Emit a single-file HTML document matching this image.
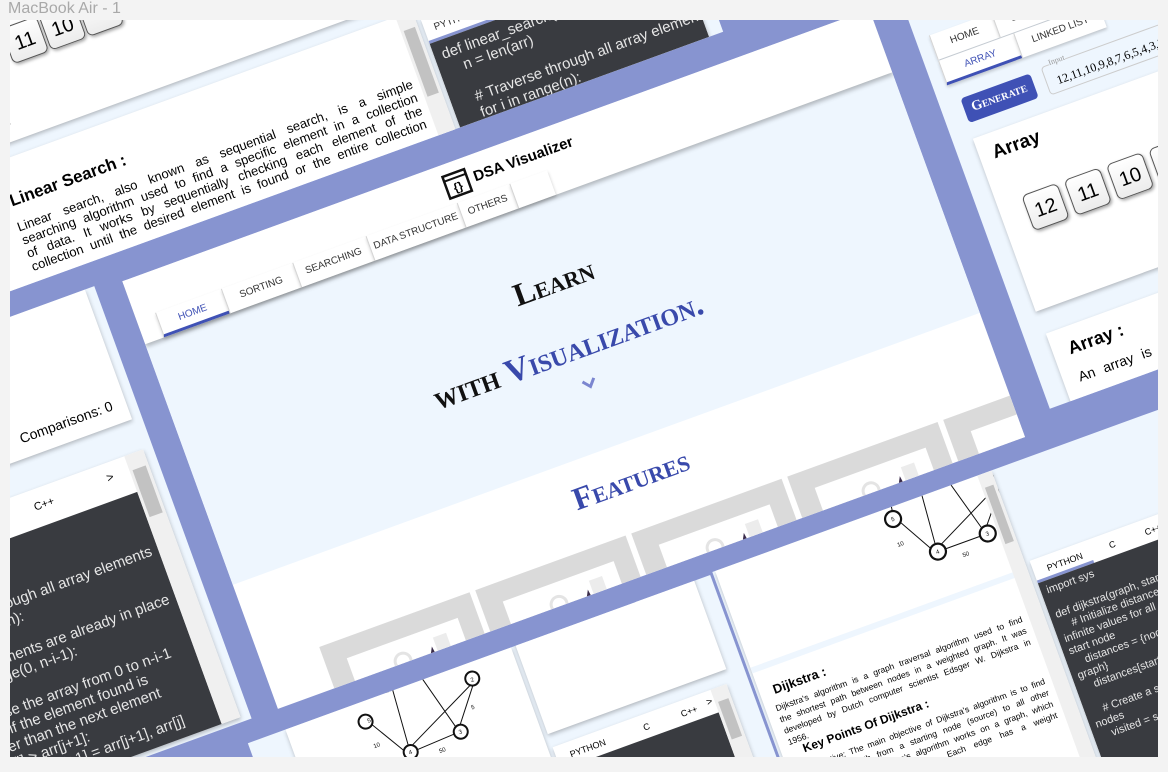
<!DOCTYPE html>
<html><head><meta charset="utf-8"><style>
*{margin:0;padding:0;box-sizing:border-box}
html,body{width:1168px;height:772px;overflow:hidden}
body{background:#f3f3f3;position:relative;font-family:"Liberation Sans",sans-serif}
#lbl{position:absolute;left:8px;top:0;font-size:16px;color:#a9a9a9}
#frame{position:absolute;left:10px;top:20px;width:1148px;height:737px;overflow:hidden;background:#8794d0}
#g{position:absolute;left:0;top:0;transform-origin:0 0;transform:translate(114px,266px) rotate(-20deg)}
.a{position:absolute}
.pg{position:absolute;background:#eef6fe;overflow:hidden}
.card{position:absolute;background:#fff;box-shadow:0 2px 4px rgba(0,0,0,.25);overflow:hidden}
.code{position:absolute;background:#393b40;color:#e6e6e6;font-size:15px;line-height:17px;white-space:pre;overflow:hidden}
.sb{position:absolute;background:#f0f0f0}
.sb i{position:absolute;left:3px;right:3px;background:#c2c2c2}
.tab{position:absolute;background:#fff;font-size:10px;color:#333;text-align:center;border-left:1px solid #d4d4d4;box-shadow:0 2px 3px rgba(0,0,0,.2)}
.sc{font-family:"Liberation Serif",serif;font-weight:bold;font-variant:small-caps}
.box{position:absolute;width:38px;height:38px;border:1px solid #555;border-radius:6px;background:linear-gradient(#fff,#ececec);box-shadow:1px 2px 3px rgba(0,0,0,.35);font-size:20px;text-align:center;line-height:38px}
.feat{position:absolute;width:160px;height:150px;background:#dadada}
.feat div{position:absolute;left:22px;top:20px;width:118px;height:110px;background:#fff}
</style></head><body>
<div id="lbl">MacBook Air - 1</div>
<div id="frame"><div id="g">

<!-- top-left page -->
<div class="pg" style="left:-700px;top:-520px;width:1350px;height:486px">
  <div class="card" style="left:0;top:0;width:1040px;height:346px">
    <div class="box" style="left:620px;top:236px">12</div>
    <div class="box" style="left:672px;top:236px">11</div>
    <div class="box" style="left:712px;top:236px">10</div>
    <div class="box" style="left:752px;top:236px">9</div>
    <div class="a" style="left:600px;top:320px;font-size:13px">Steps: --</div>
  </div>
  <div class="card" style="left:0;top:360px;width:1065px;height:128px">
    <div class="a" style="left:622px;top:32px;font-size:17px;font-weight:bold">Linear Search :</div>
    <div class="a" style="left:620px;top:62px;width:420px;font-size:13px;line-height:14px;text-align:justify;word-spacing:4px">Linear search, also known as sequential search, is a simple searching algorithm used to find a specific element in a collection of data. It works by sequentially checking each element of the collection until the desired element is found or the entire collection</div>
    <div class="sb" style="left:1047px;top:0;width:18px;height:128px"><i style="top:16px;height:70px"></i></div>
  </div>
  <div class="card" style="left:1070px;top:370px;width:265px;height:116px;background:#fff">
    <div class="a" style="left:10px;top:8px;font-size:10px;color:#333">PYTHON</div>
    <div class="a" style="left:0;top:24px;width:70px;height:3px;background:#8794d0"></div>
    <div class="code" style="left:0;top:27px;width:265px;height:100px;padding:6px 8px">def linear_search(arr, target):
    n = len(arr)

    # Traverse through all array elements
    for i in range(n):</div>
  </div>
</div>

<!-- left page -->
<div class="pg" style="left:-700px;top:-10px;width:672px;height:460px">
  <div class="card" style="left:0;top:0;width:662px;height:138px">
    <div class="a" style="left:550px;top:110px;font-size:14px">Comparisons: 0</div>
  </div>
  <div class="card" style="left:0;top:170px;width:662px;height:285px">
    <div class="a" style="left:540px;top:12px;font-size:11px">C++</div>
    <div class="a" style="left:618px;top:8px;font-size:12px">&gt;</div>
    <div class="code" style="left:0;top:38px;width:642px;height:250px;padding:52px 0 0 370px">    # Traverse through all array elements
    for i in range(n):

    # Last i elements are already in place
    for j in range(0, n-i-1):

    # Traverse the array from 0 to n-i-1
    # Swap if the element found is
    # greater than the next element
        if arr[j] &gt; arr[j+1]:
            arr[j], arr[j+1] = arr[j+1], arr[j]</div>
    <div class="sb" style="left:642px;top:0;width:20px;height:285px"><i style="top:16px;height:50px"></i></div>
  </div>
</div>

<!-- main page -->
<div class="pg" style="left:0;top:-5px;width:795px;height:455px;background:#fff">
  <div class="a" style="left:0;top:67px;width:795px;height:256px;background:#eef6fe"></div>
  <div class="a" style="left:0;top:0;width:795px;height:67px;background:#fff;box-shadow:0 3px 4px rgba(0,0,0,.25)"></div>
  <svg class="a" style="left:335px;top:10px" width="26" height="26" viewBox="0 0 26 26"><rect x="1.5" y="1.5" width="23" height="23" fill="none" stroke="#111" stroke-width="2.5"/><line x1="1.5" y1="6.5" x2="24.5" y2="6.5" stroke="#111" stroke-width="2"/><text x="13" y="20" font-size="12" font-weight="bold" text-anchor="middle" font-family="Liberation Sans">{}</text></svg>
  <div class="a" style="left:366px;top:14px;font-size:15px;font-weight:bold">DSA Visualizer</div>
  <div class="tab" style="left:20px;top:41px;width:70px;height:26px;line-height:26px;color:#3f51b5;border-bottom:3px solid #3f51b5">HOME</div>
  <div class="tab" style="left:90px;top:41px;width:76px;height:26px;line-height:26px">SORTING</div>
  <div class="tab" style="left:166px;top:41px;width:78px;height:26px;line-height:26px">SEARCHING</div>
  <div class="tab" style="left:244px;top:41px;width:97px;height:26px;line-height:26px">DATA STRUCTURE</div>
  <div class="tab" style="left:341px;top:41px;width:56px;height:26px;line-height:26px">OTHERS</div>
  <div class="tab" style="left:397px;top:41px;width:40px;height:26px"></div>
  <div class="a sc" style="left:300px;top:130px;width:210px;text-align:center;font-size:32px;color:#111">Learn</div>
  <div class="a sc" style="left:200px;top:200px;width:390px;text-align:center;font-size:34px;color:#111">with <span style="color:#3949ab">Visualization.</span></div>
  <svg class="a" style="left:396px;top:250px" width="16" height="12"><path d="M2 2 L8 9 L14 2" fill="none" stroke="#7b86d0" stroke-width="3"/></svg>
  <div class="a sc" style="left:300px;top:342px;width:220px;text-align:center;font-size:32px;color:#3949ab">Features</div>
  <div class="feat" style="left:60px;top:411px"><div><svg width="118" height="60"><circle cx="24" cy="30" r="5" fill="#333"/><rect x="20" y="35" width="9" height="8" fill="#5a3d6e"/><circle cx="52" cy="22" r="8" fill="none" stroke="#e4e4e4" stroke-width="3"/><path d="M62 60 L84 18 L90 60Z" fill="#3a2b4a"/><rect x="88" y="10" width="14" height="16" fill="#ececec"/></svg></div></div>
  <div class="feat" style="left:226px;top:411px"><div><svg width="118" height="60"><circle cx="24" cy="30" r="5" fill="#333"/><rect x="20" y="35" width="9" height="8" fill="#5a3d6e"/><circle cx="52" cy="22" r="8" fill="none" stroke="#e4e4e4" stroke-width="3"/><path d="M62 60 L84 18 L90 60Z" fill="#3a2b4a"/><rect x="88" y="10" width="14" height="16" fill="#ececec"/></svg></div></div>
  <div class="feat" style="left:392px;top:411px"><div><svg width="118" height="60"><circle cx="24" cy="30" r="5" fill="#333"/><rect x="20" y="35" width="9" height="8" fill="#5a3d6e"/><circle cx="52" cy="22" r="8" fill="none" stroke="#e4e4e4" stroke-width="3"/><path d="M62 60 L84 18 L90 60Z" fill="#3a2b4a"/><rect x="88" y="10" width="14" height="16" fill="#ececec"/></svg></div></div>
  <div class="feat" style="left:558px;top:411px"><div><svg width="118" height="60"><circle cx="24" cy="30" r="5" fill="#333"/><rect x="20" y="35" width="9" height="8" fill="#5a3d6e"/><circle cx="52" cy="22" r="8" fill="none" stroke="#e4e4e4" stroke-width="3"/><path d="M62 60 L84 18 L90 60Z" fill="#3a2b4a"/><rect x="88" y="10" width="14" height="16" fill="#ececec"/></svg></div></div>
  <div class="feat" style="left:724px;top:411px"><div><svg width="118" height="60"><circle cx="24" cy="30" r="5" fill="#333"/><rect x="20" y="35" width="9" height="8" fill="#5a3d6e"/><path d="M62 60 L84 18 L90 60Z" fill="#3a2b4a"/></svg></div></div>
</div>

<!-- right page -->
<div class="pg" style="left:828px;top:-400px;width:480px;height:832px">
  <div class="tab" style="left:14px;top:440px;width:66px;height:26px;line-height:26px">HOME</div>
  <div class="tab" style="left:80px;top:440px;width:78px;height:26px;line-height:26px">SORTING</div>
  <div class="tab" style="left:158px;top:440px;width:90px;height:26px;line-height:26px">SEARCHING</div>
  <div class="tab" style="left:14px;top:467px;width:80px;height:26px;line-height:26px;color:#3f51b5;border-bottom:3px solid #3f51b5">ARRAY</div>
  <div class="tab" style="left:94px;top:467px;width:90px;height:26px;line-height:26px">LINKED LIST</div>
  <div class="a sc" style="left:22px;top:510px;width:74px;height:26px;background:#3f51b5;color:#fff;font-size:14px;text-align:center;line-height:26px;border-radius:4px">Generate</div>
  <div class="a" style="left:108px;top:508px;width:190px;height:30px;border:1px solid #ccc;border-radius:4px;font-family:'Liberation Serif',serif;font-size:12px;padding:10px 0 0 10px">12,11,10,9,8,7,6,5,4,3,2,1<span class="a" style="left:8px;top:-7px;font-size:8px;color:#999;background:#eef6fe">Input</span></div>
  <div class="card" style="left:20px;top:552px;width:460px;height:184px">
    <div class="a" style="left:14px;top:10px;font-size:19px;font-weight:bold">Array</div>
    <div class="box" style="left:26px;top:70px">12</div>
    <div class="box" style="left:71px;top:70px">11</div>
    <div class="box" style="left:116px;top:70px">10</div>
    <div class="box" style="left:161px;top:70px">9</div>
    <div class="box" style="left:206px;top:70px">8</div>
  </div>
  <div class="card" style="left:22px;top:760px;width:460px;height:80px">
    <div class="a" style="left:16px;top:12px;font-size:18px;font-weight:bold">Array :</div>
    <div class="a" style="left:16px;top:44px;font-size:14px;word-spacing:5px">An array is a collection of items</div>
  </div>
</div>

<!-- bottom-middle page -->
<div class="pg" style="left:-40px;top:472px;width:492px;height:440px">
  <div class="card" style="left:40px;top:0;width:240px;height:300px;overflow:hidden">
    <svg class="a" style="left:52px;top:-60px" width="180" height="140"><g transform="translate(26,80)" fill="none" stroke="#111">
      <circle cx="0" cy="0" r="7" stroke-width="2"/><circle cx="115" cy="-4" r="7" stroke-width="2"/><circle cx="86" cy="42" r="7" stroke-width="2"/><circle cx="32" cy="44" r="7" stroke-width="2"/>
      <path d="M5 5 L26 40 M39 44 L79 42 M36 38 L110 2 M88 35 L113 3 M40 -70 L32 37 M55 -70 L83 36"/></g>
      <g font-size="6" fill="#111" font-family="Liberation Sans"><text x="28" y="82">5</text><text x="139" y="79">2</text><text x="110" y="124">3</text><text x="56" y="126">4</text><text x="25" y="108">10</text><text x="85" y="135">50</text><text x="130" y="105">5</text><text x="55" y="60">100</text><text x="93" y="50">30</text></g></svg>
  </div>
  <div class="card" style="left:285px;top:-10px;width:190px;height:104px"></div>
  <div class="card" style="left:285px;top:108px;width:185px;height:340px">
    <div class="a" style="left:14px;top:8px;font-size:9px">PYTHON</div>
    <div class="a" style="left:92px;top:8px;font-size:9px">C</div>
    <div class="a" style="left:132px;top:8px;font-size:9px">C++</div>
    <div class="a" style="left:160px;top:6px;font-size:10px">&gt;</div>
    <div class="code" style="left:0;top:24px;width:168px;height:320px"></div>
    <div class="sb" style="left:168px;top:0;width:17px;height:340px"><i style="top:14px;height:40px"></i></div>
  </div>
</div>

<!-- dijkstra page -->
<div class="pg" style="left:455px;top:470px;width:560px;height:440px">
  <div class="card" style="left:3px;top:0;width:294px;height:440px">
    <svg class="a" style="left:158px;top:-70px" width="150" height="170"><g transform="translate(27,82)" fill="none" stroke="#111">
      <circle cx="0" cy="0" r="8" stroke-width="2.2"/><circle cx="112" cy="1" r="8" stroke-width="2.2"/><circle cx="84" cy="46" r="8" stroke-width="2.2"/><circle cx="31" cy="46" r="8" stroke-width="2.2"/>
      <path d="M6 6 L25 40 M39 46 L76 46 M37 40 L106 6 M86 38 L110 9 M40 -70 L31 38 M50 -70 L80 38 M10 -60 L2 -8"/></g>
      <g font-size="6" fill="#111" font-family="Liberation Sans"><text x="25" y="84">5</text><text x="137" y="85">2</text><text x="109" y="130">3</text><text x="56" y="130">4</text><text x="22" y="110">10</text><text x="80" y="142">50</text><text x="125" y="110">5</text><text x="50" y="60">100</text><text x="92" y="50">30</text></g></svg>
    <div class="a" style="left:0;top:103px;width:294px;height:6px;background:#eef6fe"></div>
    <div class="a" style="left:14px;top:124px;font-size:13px;font-weight:bold">Dijkstra :</div>
    <div class="a" style="left:10px;top:144px;width:262px;font-size:8.6px;line-height:12px;text-align:justify;word-spacing:2px">Dijkstra's algorithm is a graph traversal algorithm used to find the shortest path between nodes in a weighted graph. It was developed by Dutch computer scientist Edsger W. Dijkstra in 1956.</div>
    <div class="a" style="left:22px;top:190px;font-size:12px;font-weight:bold">Key Points Of Dijkstra :</div>
    <div class="a" style="left:10px;top:210px;width:262px;font-size:8.6px;line-height:12px;text-align:justify;word-spacing:2px">1. Objective: The main objective of Dijkstra's algorithm is to find the shortest path from a starting node (source) to all other nodes. 2. Graph: Dijkstra's algorithm works on a graph, which consists of nodes and edges. Each edge has a weight representing the distance</div>
    <div class="sb" style="left:279px;top:0;width:15px;height:440px"><i style="top:14px;height:60px"></i></div>
  </div>
  <div class="card" style="left:302px;top:98px;width:220px;height:340px">
    <div class="a" style="left:14px;top:8px;font-size:9px">PYTHON</div>
    <div class="a" style="left:0;top:21px;width:60px;height:3px;background:#8794d0"></div>
    <div class="a" style="left:80px;top:8px;font-size:9px">C</div>
    <div class="a" style="left:118px;top:8px;font-size:9px">C++</div>
    <div class="code" style="left:0;top:24px;width:220px;height:320px;font-size:11px;line-height:13px;padding:4px 6px">import sys

def dijkstra(graph, start):
    # Initialize distance dictionary
infinite values for all nodes
start node
    distances = {node: float('inf')
graph}
    distances[start] = 0

    # Create a set to keep
nodes
    visited = set()</div>
  </div>
</div>

</div></div>
</body></html>
